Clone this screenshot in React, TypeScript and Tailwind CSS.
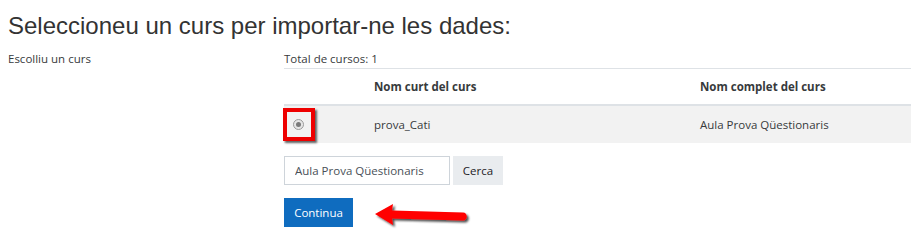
import React from 'react';

const body = { fontFamily: '"Open Sans", "Noto Sans", sans-serif' };

const courses = [
  { id: 1, shortName: 'prova_Cati', fullName: 'Aula Prova Qüestionaris' },
];

const RedArrow: React.FC = () => (
  <svg width="100" height="30" viewBox="0 0 100 30" className="absolute left-[89px] top-[4px]">
    <defs>
      <filter id="sh" x="-20%" y="-40%" width="140%" height="180%">
        <feDropShadow dx="2" dy="2" stdDeviation="1.2" floodColor="#000" floodOpacity="0.7" />
      </filter>
    </defs>
    <g filter="url(#sh)">
      <path
        d="M2 12 L20 2 L19 8.5 L90 10.5 C95 10.6 95 18.6 90 18.5 L19 16.5 L20 23 Z"
        fill="#ff0000"
      />
    </g>
  </svg>
);

export default function App() {
  return (
    <div className="w-[911px] h-[238px] bg-white overflow-hidden text-[#373a3c]" style={body}>
      <h2
        className="pl-[8px] pt-[12px] text-[24px] leading-[28px] text-[#333]"
        style={{ fontFamily: '"Liberation Sans", Arial, sans-serif' }}
      >
        Seleccioneu un curs per importar-ne les dades:
      </h2>

      <div className="flex mt-[11px]">
        <div className="w-[284px] pl-[8px] text-[11.5px] leading-[16px]">Escolliu un curs</div>

        <div className="flex-1 text-[11.5px]">
          <div className="leading-[16px] pb-[1px]">Total de cursos: 1</div>

          {/* Table */}
          <div className="border-t border-[#dee2e6]">
            <div className="grid grid-cols-[90px_326px_1fr] h-[37px] items-center border-b-2 border-[#dee2e6] font-bold">
              <div />
              <div>Nom curt del curs</div>
              <div>Nom complet del curs</div>
            </div>
            {courses.map((c) => (
              <div key={c.id} className="grid grid-cols-[90px_326px_1fr] h-[37px] items-center bg-[#f2f2f2]">
                <div className="relative h-full flex items-center">
                  <div className="ml-[9px] w-[11px] h-[11px] rounded-full border border-[#9a9a9a] bg-[#e6e6e6] flex items-center justify-center">
                    <div className="w-[5px] h-[5px] rounded-full bg-[#7a7a7a]" />
                  </div>
                  <div className="absolute left-[-1px] top-[2px] w-[32px] h-[33px] border-[4px] border-[#ee0000] shadow-[2px_2px_2px_rgba(0,0,0,0.6)]" />
                </div>
                <div>{c.shortName}</div>
                <div>{c.fullName}</div>
              </div>
            ))}
          </div>

          {/* Search */}
          <div className="flex gap-[3px] mt-[13px]">
            <input
              readOnly
              value="Aula Prova Qüestionaris"
              className="w-[166px] h-[29px] border border-[#ced4da] px-[10px] text-[11.5px] text-[#495057] outline-none"
              style={body}
            />
            <button className="w-[50px] h-[29px] bg-[#e9ecef] text-[11.5px] text-[#1d2125]">Cerca</button>
          </div>

          {/* Continue */}
          <div className="relative mt-[13px]">
            <button className="w-[69px] h-[29px] bg-[#0f6cbf] text-white text-[11.5px]">Continua</button>
            <RedArrow />
          </div>
        </div>
      </div>
    </div>
  );
}
